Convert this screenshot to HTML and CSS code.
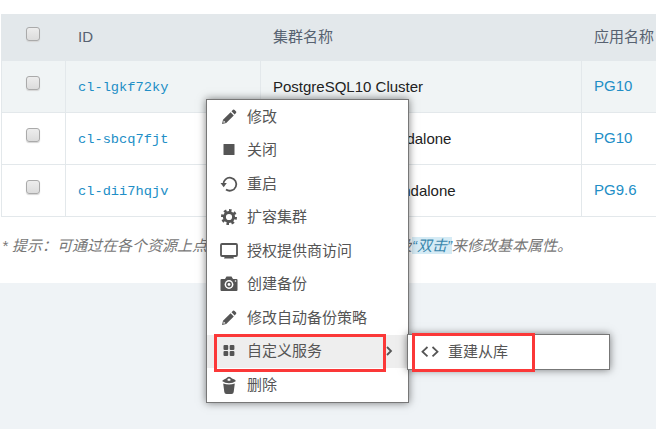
FILE: index.html
```html
<!DOCTYPE html>
<html lang="zh-CN">
<head>
<meta charset="utf-8">
<title>集群</title>
<link rel="stylesheet" href="styles.css">
</head>
<body>
<main class="panel">
  <div class="table">
    <div class="row head">
      <div class="check"><span class="box"></span></div>
      <div class="cell">ID</div>
      <div class="cell">集群名称</div>
      <div class="cell">应用名称</div>
    </div>
    <div class="row selected">
      <div class="check"><span class="box"></span></div>
      <div class="cell"><a class="mono">cl-lgkf72ky</a></div>
      <div class="cell name">PostgreSQL10 Cluster</div>
      <div class="cell"><a>PG10</a></div>
    </div>
    <div class="row">
      <div class="check"><span class="box"></span></div>
      <div class="cell"><a class="mono">cl-sbcq7fjt</a></div>
      <div class="cell name">PostgreSQL10 Standalone</div>
      <div class="cell"><a>PG10</a></div>
    </div>
    <div class="row">
      <div class="check"><span class="box"></span></div>
      <div class="cell"><a class="mono">cl-dii7hqjv</a></div>
      <div class="cell name">PostgreSQL9.6 Standalone</div>
      <div class="cell"><a>PG9.6</a></div>
    </div>
  </div>
  <p class="hint">* 提示：可通过在各个资源上点击<mark>“右键”</mark>来进行常用操作，以及<mark>“双击”</mark>来修改基本属性。</p>
</main>

<nav class="menu">
  <div class="item"><svg viewBox="0 0 18 18"><path d="M2 16l1-4.200 7.600-7.600 3.200 3.200L6.200 15zM11.500 3.300l1.500-1.500q.8-.6 1.600.1l1.500 1.500q.6.800-.1 1.600l-1.400 1.400z"/><path class="hole" d="M3.700 12.500l1.800 1.700-2.200.6z"/></svg>修改</div>
  <div class="item"><svg viewBox="0 0 18 18"><rect x="3.500" y="3" width="11" height="11" rx=".5"/></svg>关闭</div>
  <div class="item"><svg viewBox="0 0 18 18"><path class="line" d="M3.300 9.500A6.500 6.500 0 1 1 6 14.500"/><path d="M.5 8h6.300l-3.100 4.200z"/></svg>重启</div>
  <div class="item"><svg viewBox="0 0 18 18"><circle class="teeth" cx="9" cy="9" r="6.500" pathLength="80"/><circle class="ring" cx="9" cy="9" r="4.600"/></svg>扩容集群</div>
  <div class="item"><svg viewBox="0 0 18 18"><rect class="screen" x="1" y="2" width="16" height="12" rx="1"/><path d="M5 14h8l1 2.500H4z"/></svg>授权提供商访问</div>
  <div class="item"><svg viewBox="0 0 18 18"><path d="M1.500 4H5l1.500-2.500h5L13 4h3.500q1 0 1 1v10q0 1-1 1h-15q-1 0-1-1V5q0-1 1-1z"/><circle class="hole" cx="9" cy="9.500" r="4.400"/><circle cx="9" cy="9.500" r="2.900"/><circle class="hole" cx="9" cy="9.500" r="1.400"/><circle class="hole" cx="15.500" cy="6" r=".8"/></svg>创建备份</div>
  <div class="item"><svg viewBox="0 0 18 18"><path d="M2 16l1-4.200 7.600-7.600 3.200 3.200L6.200 15zM11.500 3.300l1.500-1.500q.8-.6 1.600.1l1.500 1.500q.6.800-.1 1.600l-1.400 1.400z"/><path class="hole" d="M3.700 12.500l1.800 1.700-2.200.6z"/></svg>修改自动备份策略</div>
  <div class="item active"><svg viewBox="0 0 18 18"><rect x="3.500" y="3" width="4.700" height="5" rx="1"/><rect x="9.700" y="3" width="4.700" height="5" rx="1"/><rect x="3.500" y="9" width="4.700" height="5" rx="1"/><rect x="9.700" y="9" width="4.700" height="5" rx="1"/></svg>自定义服务
    <svg class="chevron" viewBox="0 0 6 10"><path class="line" d="M1 1l4 4-4 4"/></svg>
  </div>
  <div class="item"><svg viewBox="0 0 18 18"><path d="M2 5q2-2 4-2.500Q9-1 12 2.500q3 .5 4 2.500-3 2.200-7 2.200T2 5z"/><path class="hole" d="M7 4l2-1.700L11 4l-2 1z"/><path d="M3.200 7.500q6 2.200 11.600 0L13.700 16q-.2 2-2.200 2h-5q-2 0-2.200-2z"/></svg>删除</div>
</nav>

<div class="menu submenu">
  <div class="item"><svg viewBox="0 0 18 18"><path class="line" d="M6.500 4l-5 4.700 5 4.700M11.500 4l5 4.700-5 4.700"/></svg>重建从库</div>
</div>
<div class="frame frame-service"></div>
<div class="frame frame-rebuild"></div>
</body>
</html>
```
FILE: styles.css
```css
* { box-sizing: border-box; }
body {
  margin: 0;
  width: 656px;
  height: 429px;
  position: relative;
  overflow: hidden;
  background: #eff3f6;
  font: 15px/20px "Liberation Sans", "Noto Sans CJK SC", sans-serif;
  color: #555;
}
.panel { height: 283px; padding: 14px 0 0 1px; background: #fff; }
.table { width: 700px; border-left: 1px solid #e3e8eb; }
.row {
  display: grid;
  grid-template-columns: 64px 195px 321px 1fr;
  height: 52px;
  border-bottom: 1px solid #e3e8eb;
}
.row > div { border-right: 1px solid #e3e8eb; }
.head { height: 47px; background: #e3e8eb; color: #576271; }
.selected { background: #f0f4f5; }
.check { padding: 15px 0 0 24px; }
.head .check { padding-top: 13px; }
.box {
  display: block;
  width: 14px;
  height: 14px;
  border: 1px solid #aaa;
  border-radius: 3px;
  background: linear-gradient(#ededed, #dcdcdc);
  box-shadow: 0 1px 1px #d5d5d5;
}
.cell { padding: 15px 0 0 12px; white-space: nowrap; }
.head .cell { padding-top: 13px; }
.name { padding-top: 16px; color: #222; }
a { color: #218ec6; }
.mono { font-family: "Liberation Mono", monospace; font-size: 13.7px; }
.hint { margin: 19px 0 0 1px; font-style: italic; white-space: nowrap; color: #777; }
mark { background: #d5ebf5; color: #3a87ad; }
.menu {
  position: absolute;
  left: 206px;
  top: 99px;
  width: 203px;
  height: 304px;
  border: 1px solid #777;
  background: #fff;
  box-shadow: 0 0 8px rgba(0, 0, 0, .5);
}
.item { display: flex; align-items: center; height: 33.5px; padding-left: 13px; gap: 9px; }
.item svg { width: 18px; height: 18px; flex: none; fill: #555; }
.item .line { fill: none; stroke: #555; stroke-width: 1.8; }
.item .hole { fill: #fff; }
.teeth { fill: none; stroke: #555; stroke-width: 3; stroke-dasharray: 5 5; }
.ring { fill: none; stroke: #555; stroke-width: 3; }
.screen { fill: none; stroke: #555; stroke-width: 1.8; }
.active { background: #eee; }
.item .chevron { width: 6px; height: 10px; margin: 0 16px 0 auto; overflow: visible; }
.submenu { left: 407px; top: 334px; width: 203px; height: 36px; }
.frame { position: absolute; border: 3px solid #fb3838; }
.frame-service { left: 214px; top: 334px; width: 172px; height: 38px; }
.frame-rebuild { left: 412px; top: 333px; width: 123px; height: 39px; }
```
